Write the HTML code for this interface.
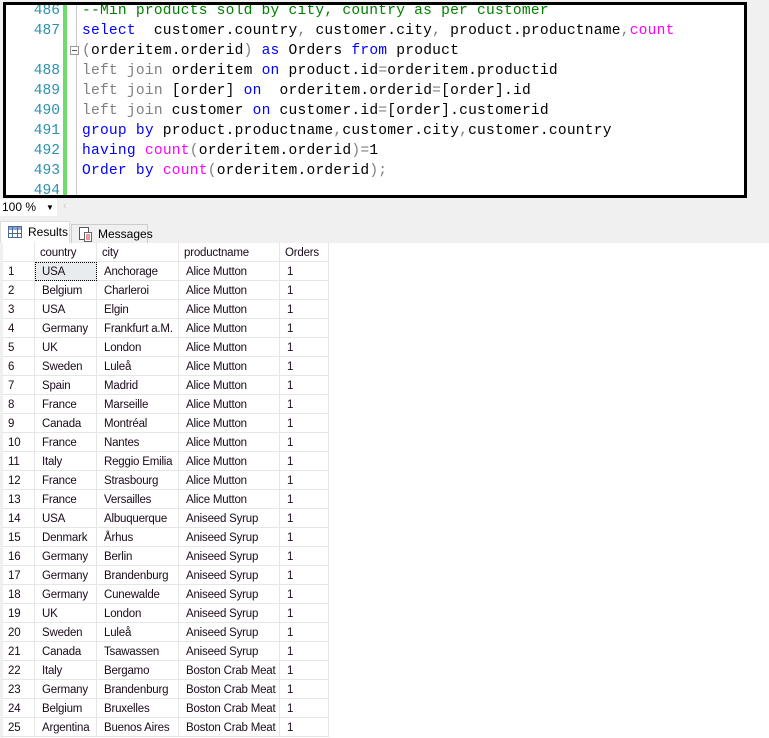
<!DOCTYPE html>
<html><head><meta charset="utf-8"><style>
*{margin:0;padding:0;box-sizing:border-box}
body{width:769px;height:738px;overflow:hidden;background:#f0f0f0;position:relative;font-family:"Liberation Sans",Arial,sans-serif}
.ed{position:absolute;left:3px;top:2px;width:744px;height:196px;border:3px solid #000;background:#fff;overflow:hidden}
.gut{position:absolute;left:0;top:0;width:57px;height:100%;background:#fff}
.green{position:absolute;left:57px;top:0;width:4px;height:100%;background:#6ddc6d}
.sep{position:absolute;left:70px;top:0;width:1px;height:100%;background:#c8c8c8}
.ln{position:absolute;left:0;width:54px;text-align:right;font:14.6px "Liberation Mono",monospace;color:#2b91af;line-height:20px}
.code{position:absolute;left:76px;font:14.6px "Liberation Mono",monospace;letter-spacing:0.22px;line-height:20px;white-space:pre;color:#000}
.k{color:#0000ff}.g{color:#808080}.f{color:#ff00ff}.c{color:#008000}
.fold{position:absolute;left:64px;width:9px;height:9px;border:1px solid #999;background:#fff}
.fold:after{content:"";position:absolute;left:1px;top:3px;width:5px;height:1px;background:#555}
.zoom{position:absolute;left:0;top:199px;width:57px;height:17px;background:#fff;font-size:12px;line-height:17px;padding-left:2px;color:#000}
.zoom span{position:absolute;left:46px;top:0;font-size:8px}
.tab1{position:absolute;left:0;top:221px;width:70px;height:22px;background:#fff;border:1px solid #ddd;border-bottom:none;font-size:12px;line-height:20px;padding-left:27px}
.tab2{position:absolute;left:71px;top:224px;width:77px;height:19px;background:#f0f0f0;border:1px solid #ccc;border-bottom:none;font-size:12px;line-height:18px;padding-left:26px}
.grid{position:absolute;left:0;top:243px;width:769px;height:495px;background:#fff;border-left:3px solid #f0f0f0}
.r{position:absolute;left:0;height:19px;font-size:11.5px;letter-spacing:-0.2px;line-height:20px;color:#1a0a1a}
.r div{position:absolute;top:0;height:19px;border-right:1px solid #e6e6e6;border-bottom:1px solid #e6e6e6;white-space:nowrap;overflow:hidden}
.a{left:3px;width:32px;padding-left:5px}.b{left:35px;width:62px;padding-left:7px}.cc{left:97px;width:82px;padding-left:7px}.d{left:179px;width:101px;padding-left:7px}.e{left:280px;width:49px;padding-left:7px}
.h div{padding-left:5px}
</style></head><body>
<div class="ed">
<div class="gut"></div><div class="green"></div><div class="sep"></div>
<div class="ln" style="top:-4px">486</div>
<div class="ln" style="top:16px">487</div>
<div class="ln" style="top:56px">488</div>
<div class="ln" style="top:76px">489</div>
<div class="ln" style="top:96px">490</div>
<div class="ln" style="top:116px">491</div>
<div class="ln" style="top:136px">492</div>
<div class="ln" style="top:156px">493</div>
<div class="ln" style="top:176px">494</div>
<div class="fold" style="top:41px"></div>
<div class="code" style="top:-4px"><span class="c">--Min products sold by city, country as per customer</span></div>
<div class="code" style="top:16px"><span class="k">select</span>  customer.country<span class="g">,</span> customer.city<span class="g">,</span> product.productname<span class="g">,</span><span class="f">count</span></div>
<div class="code" style="top:36px"><span class="g">(</span>orderitem.orderid<span class="g">)</span> <span class="k">as</span> Orders <span class="k">from</span> product</div>
<div class="code" style="top:56px"><span class="g">left join</span> orderitem <span class="k">on</span> product.id<span class="g">=</span>orderitem.productid</div>
<div class="code" style="top:76px"><span class="g">left join</span> [order] <span class="k">on</span>  orderitem.orderid<span class="g">=</span>[order].id</div>
<div class="code" style="top:96px"><span class="g">left join</span> customer <span class="k">on</span> customer.id<span class="g">=</span>[order].customerid</div>
<div class="code" style="top:116px"><span class="k">group by</span> product.productname<span class="g">,</span>customer.city<span class="g">,</span>customer.country</div>
<div class="code" style="top:136px"><span class="k">having</span> <span class="f">count</span><span class="g">(</span>orderitem.orderid<span class="g">)=</span>1</div>
<div class="code" style="top:156px"><span class="k">Order by</span> <span class="f">count</span><span class="g">(</span>orderitem.orderid<span class="g">);</span></div>
</div>
<div class="zoom">100 %<span>▼</span></div>
<div style="position:absolute;left:63px;top:200px;color:#ccc;font-size:11px">‹</div>
<div class="tab1"><svg style="position:absolute;left:7px;top:4px" width="14" height="12"><rect x="0.5" y="0.5" width="13" height="11" fill="#fff" stroke="#4a6a9a"/><rect x="1" y="1" width="12" height="3" fill="#8aa8d0"/><path d="M0 7.5H14M4.5 0V12M9.5 0V12" stroke="#4a6a9a"/></svg>Results</div>
<div class="tab2"><svg style="position:absolute;left:6px;top:2px" width="15" height="15"><rect x="1.5" y="0.5" width="9" height="12" fill="#fff" stroke="#555"/><rect x="6.5" y="5.5" width="7" height="9" fill="#fff" stroke="#666"/><path d="M8 8h4M8 10h4M8 12h4" stroke="#d33"/></svg>Messages</div>
<div class="grid"></div>
<div class="r h" style="top:243px;background:#fff"><div class="a"></div><div class="b">country</div><div class="cc">city</div><div class="d">productname</div><div class="e">Orders</div></div>
<div class="r" style="top:262px"><div class="a">1</div><div class="b" style="background:#e8ecef;outline:1px dotted #000;outline-offset:-1px">USA</div><div class="cc">Anchorage</div><div class="d">Alice Mutton</div><div class="e">1</div></div>
<div class="r" style="top:281px"><div class="a">2</div><div class="b">Belgium</div><div class="cc">Charleroi</div><div class="d">Alice Mutton</div><div class="e">1</div></div>
<div class="r" style="top:300px"><div class="a">3</div><div class="b">USA</div><div class="cc">Elgin</div><div class="d">Alice Mutton</div><div class="e">1</div></div>
<div class="r" style="top:319px"><div class="a">4</div><div class="b">Germany</div><div class="cc">Frankfurt a.M.</div><div class="d">Alice Mutton</div><div class="e">1</div></div>
<div class="r" style="top:338px"><div class="a">5</div><div class="b">UK</div><div class="cc">London</div><div class="d">Alice Mutton</div><div class="e">1</div></div>
<div class="r" style="top:357px"><div class="a">6</div><div class="b">Sweden</div><div class="cc">Luleå</div><div class="d">Alice Mutton</div><div class="e">1</div></div>
<div class="r" style="top:376px"><div class="a">7</div><div class="b">Spain</div><div class="cc">Madrid</div><div class="d">Alice Mutton</div><div class="e">1</div></div>
<div class="r" style="top:395px"><div class="a">8</div><div class="b">France</div><div class="cc">Marseille</div><div class="d">Alice Mutton</div><div class="e">1</div></div>
<div class="r" style="top:414px"><div class="a">9</div><div class="b">Canada</div><div class="cc">Montréal</div><div class="d">Alice Mutton</div><div class="e">1</div></div>
<div class="r" style="top:433px"><div class="a">10</div><div class="b">France</div><div class="cc">Nantes</div><div class="d">Alice Mutton</div><div class="e">1</div></div>
<div class="r" style="top:452px"><div class="a">11</div><div class="b">Italy</div><div class="cc">Reggio Emilia</div><div class="d">Alice Mutton</div><div class="e">1</div></div>
<div class="r" style="top:471px"><div class="a">12</div><div class="b">France</div><div class="cc">Strasbourg</div><div class="d">Alice Mutton</div><div class="e">1</div></div>
<div class="r" style="top:490px"><div class="a">13</div><div class="b">France</div><div class="cc">Versailles</div><div class="d">Alice Mutton</div><div class="e">1</div></div>
<div class="r" style="top:509px"><div class="a">14</div><div class="b">USA</div><div class="cc">Albuquerque</div><div class="d">Aniseed Syrup</div><div class="e">1</div></div>
<div class="r" style="top:528px"><div class="a">15</div><div class="b">Denmark</div><div class="cc">Århus</div><div class="d">Aniseed Syrup</div><div class="e">1</div></div>
<div class="r" style="top:547px"><div class="a">16</div><div class="b">Germany</div><div class="cc">Berlin</div><div class="d">Aniseed Syrup</div><div class="e">1</div></div>
<div class="r" style="top:566px"><div class="a">17</div><div class="b">Germany</div><div class="cc">Brandenburg</div><div class="d">Aniseed Syrup</div><div class="e">1</div></div>
<div class="r" style="top:585px"><div class="a">18</div><div class="b">Germany</div><div class="cc">Cunewalde</div><div class="d">Aniseed Syrup</div><div class="e">1</div></div>
<div class="r" style="top:604px"><div class="a">19</div><div class="b">UK</div><div class="cc">London</div><div class="d">Aniseed Syrup</div><div class="e">1</div></div>
<div class="r" style="top:623px"><div class="a">20</div><div class="b">Sweden</div><div class="cc">Luleå</div><div class="d">Aniseed Syrup</div><div class="e">1</div></div>
<div class="r" style="top:642px"><div class="a">21</div><div class="b">Canada</div><div class="cc">Tsawassen</div><div class="d">Aniseed Syrup</div><div class="e">1</div></div>
<div class="r" style="top:661px"><div class="a">22</div><div class="b">Italy</div><div class="cc">Bergamo</div><div class="d">Boston Crab Meat</div><div class="e">1</div></div>
<div class="r" style="top:680px"><div class="a">23</div><div class="b">Germany</div><div class="cc">Brandenburg</div><div class="d">Boston Crab Meat</div><div class="e">1</div></div>
<div class="r" style="top:699px"><div class="a">24</div><div class="b">Belgium</div><div class="cc">Bruxelles</div><div class="d">Boston Crab Meat</div><div class="e">1</div></div>
<div class="r" style="top:718px"><div class="a">25</div><div class="b">Argentina</div><div class="cc">Buenos Aires</div><div class="d">Boston Crab Meat</div><div class="e">1</div></div>
</body></html>
